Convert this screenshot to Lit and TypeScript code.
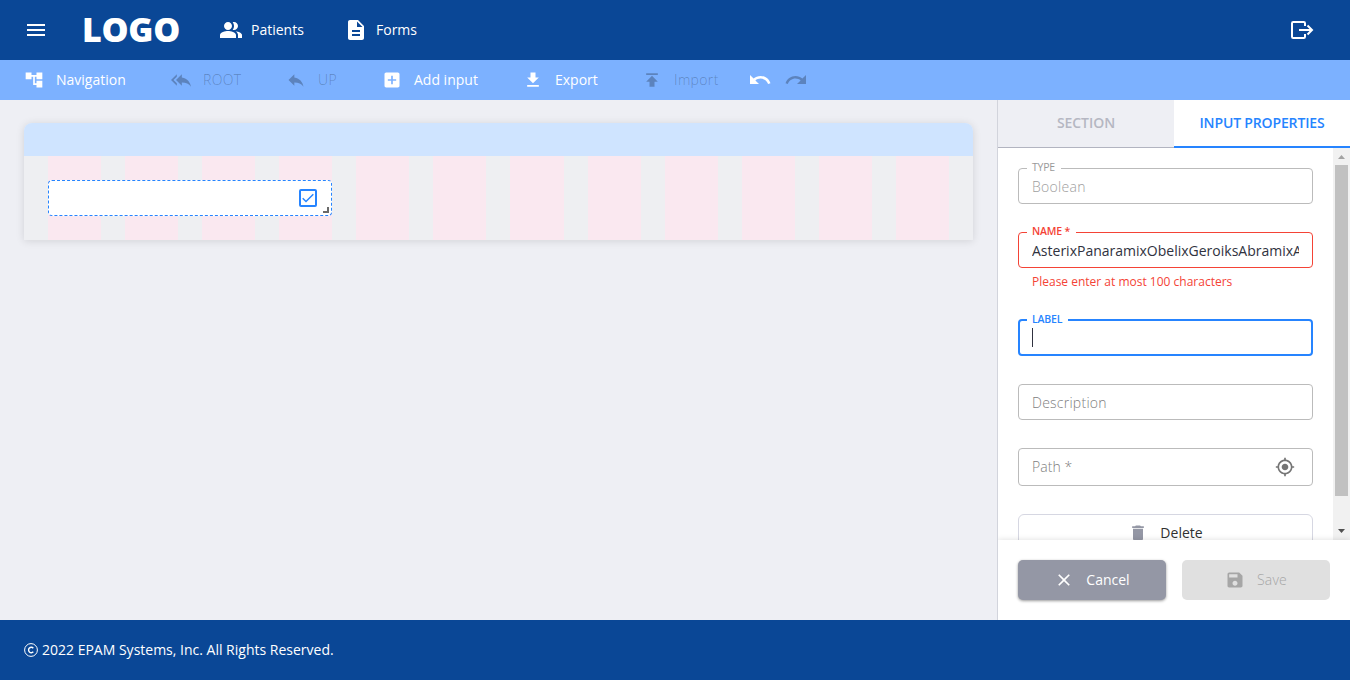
import { LitElement, html, css, nothing } from "lit";
import { customElement, property } from "lit/decorators.js";
import { classMap } from "lit/directives/class-map.js";

const ICONS: Record<string, string> = {
  menu: "M3 18h18v-2H3v2zm0-5h18v-2H3v2zm0-7v2h18V6H3z",
  people:
    "M16.67 13.13C18.04 14.06 19 15.32 19 17v3h4v-3c0-2.18-3.57-3.47-6.33-3.87zM15 12c2.21 0 4-1.79 4-4s-1.79-4-4-4c-.47 0-.91.1-1.33.24C14.5 5.27 15 6.58 15 8s-.5 2.73-1.33 3.76c.42.14.86.24 1.33.24zM9 12c2.21 0 4-1.79 4-4s-1.79-4-4-4-4 1.79-4 4 1.79 4 4 4zm0 1c-2.67 0-8 1.34-8 4v3h16v-3c0-2.66-5.33-4-8-4z",
  description:
    "M14 2H6c-1.1 0-1.99.9-1.99 2L4 20c0 1.1.89 2 1.99 2H18c1.1 0 2-.9 2-2V8l-6-6zm2 16H8v-2h8v2zm0-4H8v-2h8v2zm-3-5V3.5L18.5 9H13z",
  tree: "M22 11V3h-7v3H9V3H2v8h7V8h2v10h4v3h7v-8h-7v3h-2V8h2v3z",
  replyAll: "M7 8V5l-7 7 7 7v-3l-4-4 4-4zm6 1V5l-7 7 7 7v-4.1c5 0 8.500 1.600 11 5.100-1-5-4-10-11-11z",
  reply: "M10 9V5l-7 7 7 7v-4.1c5 0 8.500 1.600 11 5.100-1-5-4-10-11-11z",
  addBox:
    "M19 3H5c-1.110 0-2 .9-2 2v14c0 1.100.89 2 2 2h14c1.100 0 2-.9 2-2V5c0-1.100-.9-2-2-2zm-2 10h-4v4h-2v-4H7v-2h4V7h2v4h4v2z",
  download: "M19 9h-4V3H9v6H5l7 7 7-7zM5 18v2h14v-2H5z",
  publish: "M5 4v2h14V4H5zm0 10h4v6h6v-6h4l-7-7-7 7z",
  undo: "M12.5 8c-2.650 0-5.050.99-6.900 2.600L2 7v9h9l-3.620-3.620c1.390-1.160 3.160-1.880 5.120-1.880 3.540 0 6.550 2.310 7.600 5.500l2.370-.78C21.080 11.030 17.150 8 12.500 8z",
  redo: "M18.400 10.600C16.550 8.990 14.150 8 11.500 8c-4.650 0-8.580 3.030-9.960 7.220L3.900 16c1.050-3.190 4.050-5.500 7.600-5.500 1.950 0 3.730.72 5.120 1.880L13 16h9V7l-3.600 3.600z",
  target:
    "M12 8c-2.210 0-4 1.790-4 4s1.790 4 4 4 4-1.790 4-4-1.790-4-4-4zm8.940 3c-.46-4.170-3.770-7.480-7.940-7.940V1h-2v2.060C6.830 3.520 3.520 6.830 3.060 11H1v2h2.060c.46 4.170 3.770 7.480 7.940 7.940V23h2v-2.060c4.170-.46 7.480-3.770 7.940-7.940H23v-2h-2.060zM12 19c-3.870 0-7-3.130-7-7s3.130-7 7-7 7 3.130 7 7-3.130 7-7 7z",
  trash: "M6 19c0 1.100.9 2 2 2h8c1.100 0 2-.9 2-2V7H6v12zM19 4h-3.500l-1-1h-5l-1 1H5v2h14V4z",
  close: "M19 6.410L17.590 5 12 10.590 6.410 5 5 6.410 10.590 12 5 17.590 6.410 19 12 13.410 17.590 19 19 17.590 13.410 12z",
  save: "M17 3H5c-1.110 0-2 .9-2 2v14c0 1.100.89 2 2 2h14c1.100 0 2-.9 2-2V7l-4-4zm-5 16c-1.660 0-3-1.340-3-3s1.340-3 3-3 3 1.340 3 3-1.340 3-3 3zm3-10H5V5h10v4z",
};

const icon = (name: string, size = 20) => html`
  <svg width=${size} height=${size} viewBox="0 0 24 24" fill="currentColor"><path d=${ICONS[name]}></path></svg>
`;

@customElement("form-field")
class FormField extends LitElement {
  @property() label = "";
  @property() value = "";
  @property() placeholder = "";
  @property() helper = "";
  @property() state = "";
  @property() endIcon = "";

  static styles = css`
    :host { display: block; }
    .box {
      position: relative;
      box-sizing: border-box;
      height: 36px;
      display: flex;
      align-items: center;
      justify-content: space-between;
      padding: 2px 13px 0;
      border: 1px solid #bbb;
      border-radius: 4px;
      color: #303240;
      font-size: 14px;
    }
    .tall { height: 38px; padding: 0 17px 0 13px; }
    .error { border-color: #f44336; }
    .focused { height: 37px; border: 2px solid #2684ff; padding: 0 12px; }
    .label {
      position: absolute;
      left: 8px;
      top: -9px;
      padding: 0 6px 0 5px;
      background: #fff;
      font-size: 10.5px;
      line-height: 14px;
      font-weight: 400;
      letter-spacing: -0.2px;
      color: #999;
      white-space: pre;
    }
    .error .label { color: #f44336; font-weight: 600; }
    .focused .label { color: #2684ff; font-weight: 600; left: 7px; top: -9px; }
    .value { flex: 1; min-width: 0; overflow: hidden; white-space: nowrap; line-height: 20px; }
    .muted { color: #808080; font-weight: 300; letter-spacing: 0.25px; }
    .tall .muted { letter-spacing: 0.05px; }
    .disabled { color: #9e9e9e; font-weight: 300; letter-spacing: 0.3px; }
    .caret { width: 1px; height: 19px; background: #303240; }
    .helper { padding: 6px 14px 0; font-size: 12px; line-height: 16px; color: #f44336; }
    svg { display: block; color: #757575; }
  `;

  render() {
    const cls = {
      box: true,
      error: this.state === "error",
      focused: this.state === "focused",
      tall: !!this.endIcon,
    };
    const valueCls = {
      value: true,
      muted: !!this.placeholder,
      disabled: this.state === "disabled",
    };
    return html`
      <div class=${classMap(cls)}>
        ${this.label ? html`<span class="label">${this.label}</span>` : nothing}
        ${this.state === "focused"
          ? html`<span class="caret"></span>`
          : html`<span class=${classMap(valueCls)}>${this.value || this.placeholder}</span>`}
        ${this.endIcon ? icon(this.endIcon) : nothing}
      </div>
      ${this.helper ? html`<div class="helper">${this.helper}</div>` : nothing}
    `;
  }
}

@customElement("app-root")
class AppRoot extends LitElement {
  static styles = css`
    :host {
      display: flex;
      flex-direction: column;
      height: 680px;
      overflow: hidden;
      background: #eeeff4;
      font-family: "Open Sans", sans-serif;
      font-size: 14px;
      line-height: 20px;
      color: #303240;
    }
    svg { display: block; flex: none; }
    .header {
      height: 60px;
      flex: none;
      box-sizing: border-box;
      display: flex;
      align-items: center;
      padding: 0 36px 0 24px;
      background: #0a4796;
      color: #fff;
    }
    .logo {
      width: 137px;
      margin-left: 34px;
      padding-bottom: 2px;
      font-size: 34px;
      line-height: 58px;
      font-weight: 800;
      letter-spacing: -0.3px;
    }
    .link { display: flex; align-items: center; gap: 8px; width: 125px; }
    .logout { margin-left: auto; }
    .toolbar {
      height: 40px;
      flex: none;
      display: flex;
      align-items: center;
      padding-left: 24px;
      background: #7cb1ff;
      color: #fff;
    }
    .tool { display: flex; align-items: center; gap: 12px; flex: none; }
    .off { color: rgba(0, 0, 0, 0.26); }
    .off span { font-weight: 300; letter-spacing: 0.35px; }
    .history { display: flex; gap: 12px; }
    .main { flex: 1; min-height: 0; display: flex; }
    .canvas { flex: 1; padding: 23px 24px; }
    .section { height: 117px; border-radius: 8px 8px 0 0; box-shadow: 0 1px 8px rgba(0, 0, 0, 0.12); }
    .section-head { height: 33px; border-radius: 8px 8px 0 0; background: #cfe4ff; }
    .grid {
      height: 84px;
      box-sizing: border-box;
      padding: 0 24px;
      background: #eeeff2;
      display: grid;
      grid-template-columns: repeat(12, minmax(0, 1fr));
      grid-template-rows: 84px;
      column-gap: 24px;
    }
    .col { grid-row: 1; background: #fae8f0; }
    .item {
      grid-row: 1;
      grid-column: 1 / span 4;
      position: relative;
      box-sizing: border-box;
      height: 36px;
      margin-top: 24px;
      padding-right: 11px;
      display: flex;
      align-items: center;
      justify-content: flex-end;
      border: 1px dashed #2684ff;
      border-radius: 4px;
      background: #fff;
    }
    .handle {
      position: absolute;
      right: 2px;
      bottom: 2px;
      width: 4px;
      height: 4px;
      border-right: 2px solid #6a6a6a;
      border-bottom: 2px solid #6a6a6a;
    }
    .panel {
      width: 352px;
      flex: none;
      display: flex;
      flex-direction: column;
      border-left: 1px solid #d2d4dc;
      background: #fff;
    }
    .tabs { display: flex; height: 48px; flex: none; }
    .tab {
      flex: 1;
      box-sizing: border-box;
      border-bottom: 1px solid #b2b4c0;
      background: #eeeff4;
      color: #b5b7c2;
      text-align: center;
      line-height: 46px;
      font-weight: 600;
      letter-spacing: -0.05px;
    }
    .active { border-bottom: 2px solid #2684ff; background: #fff; color: #2684ff; letter-spacing: -0.15px; }
    .scroll { flex: 1; min-height: 0; overflow: hidden; display: flex; }
    .fields { flex: 1; min-width: 0; padding: 20px; display: flex; flex-direction: column; }
    .f-name { margin-top: 28px; }
    .f-label { margin-top: 29px; }
    .f-desc, .f-path, .delete { margin-top: 28px; }
    .delete {
      height: 40px;
      flex: none;
      box-sizing: border-box;
      display: flex;
      align-items: center;
      justify-content: center;
      gap: 12px;
      padding-bottom: 2px;
      border: 1px solid #d6d7e2;
      border-radius: 6px;
      color: #303030;
    }
    .delete svg { color: #9497a5; }
    .bar {
      width: 17px;
      flex: none;
      box-sizing: border-box;
      display: flex;
      flex-direction: column;
      align-items: center;
      padding: 7px 0;
      background: #f1f1f1;
    }
    .thumb { width: 13px; height: 331px; margin: 6px 0 auto; background: #c1c1c1; }
    .up { color: #a3a3a3; }
    .down { color: #505050; }
    .actions {
      height: 80px;
      flex: none;
      position: relative;
      box-sizing: border-box;
      padding: 20px;
      display: flex;
      gap: 16px;
      background: #fff;
      box-shadow: 0 0 6px rgba(0, 0, 0, 0.14);
      clip-path: inset(-8px 0 0 0);
    }
    .btn {
      flex: 1;
      display: flex;
      align-items: center;
      justify-content: center;
      gap: 12px;
      border-radius: 5px;
    }
    .cancel { background: #9497a5; color: #fff; box-shadow: 0 1px 3px rgba(0, 0, 0, 0.4); }
    .save { background: #e0e0e0; color: #a6a6a6; }
    .save span { font-weight: 300; letter-spacing: 0.2px; }
    .footer {
      height: 60px;
      flex: none;
      display: flex;
      align-items: center;
      gap: 4px;
      padding-left: 24px;
      background: #0a4796;
      color: #fff;
    }
    .w-nav { width: 147px; }
    .w-root { width: 115px; }
    .w-up { width: 96px; }
    .w-add { width: 141px; }
    .w-exp { width: 119px; }
    .w-imp { width: 106px; }
  `;

  private tools = [
    { icon: "tree", text: "Navigation", width: "w-nav" },
    { icon: "replyAll", text: "ROOT", off: true, width: "w-root" },
    { icon: "reply", text: "UP", off: true, width: "w-up" },
    { icon: "addBox", text: "Add input", width: "w-add" },
    { icon: "download", text: "Export", width: "w-exp" },
    { icon: "publish", text: "Import", off: true, width: "w-imp" },
  ];

  render() {
    return html`
      <header class="header">
        ${icon("menu", 24)}
        <span class="logo">LOGO</span>
        <span class="link">${icon("people", 24)}<span>Patients</span></span>
        <span class="link">${icon("description", 24)}<span>Forms</span></span>
        <svg class="logout" width="24" height="20" viewBox="0 0 24 20" fill="none" stroke="#fff" stroke-width="2">
          <path d="M15 6V3.200Q15 2 13.800 2H3.200Q2 2 2 3.200V16.800Q2 18 3.200 18H13.800Q15 18 15 16.800V14M9 10H21.500M17.500 5.500L22 10L17.500 14.500"></path>
        </svg>
      </header>
      <nav class="toolbar">
        ${this.tools.map(
          (t) => html`<span class="tool ${t.width} ${t.off ? "off" : ""}">${icon(t.icon)}<span>${t.text}</span></span>`,
        )}
        <span class="history">${icon("undo", 24)}<span class="off">${icon("redo", 24)}</span></span>
      </nav>
      <div class="main">
        <div class="canvas">
          <div class="section">
            <div class="section-head"></div>
            <div class="grid">
              ${Array.from({ length: 12 }, (_, i) => html`<div class="col" style="grid-column: ${i + 1}"></div>`)}
              <div class="item">
                <svg width="24" height="24" viewBox="0 0 24 24" fill="none" stroke="#2684ff" stroke-width="2">
                  <rect x="4" y="4" width="16" height="16" rx="1"></rect>
                  <path d="M6.700 12.200L10 15.500L17.300 8.200" stroke-width="1.500"></path>
                </svg>
                <span class="handle"></span>
              </div>
            </div>
          </div>
        </div>
        <aside class="panel">
          <div class="tabs">
            <div class="tab">SECTION</div>
            <div class="tab active">INPUT PROPERTIES</div>
          </div>
          <div class="scroll">
            <div class="fields">
              <form-field label="TYPE" value="Boolean" state="disabled"></form-field>
              <form-field
                class="f-name"
                label="NAME *"
                value="AsterixPanaramixObelixGeroiksAbramixAsterix"
                state="error"
                helper="Please enter at most 100 characters"
              ></form-field>
              <form-field class="f-label" label="LABEL" state="focused"></form-field>
              <form-field class="f-desc" placeholder="Description"></form-field>
              <form-field class="f-path" placeholder="Path *" .endIcon=${"target"}></form-field>
              <div class="delete">${icon("trash")}<span>Delete</span></div>
            </div>
            <div class="bar">
              <svg class="up" width="7" height="4" viewBox="0 0 7 4" fill="currentColor"><path d="M0 4L3.500 0L7 4Z"></path></svg>
              <div class="thumb"></div>
              <svg class="down" width="7" height="4" viewBox="0 0 7 4" fill="currentColor"><path d="M0 0L3.500 4L7 0Z"></path></svg>
            </div>
          </div>
          <div class="actions">
            <div class="btn cancel">${icon("close")}<span>Cancel</span></div>
            <div class="btn save">${icon("save")}<span>Save</span></div>
          </div>
        </aside>
      </div>
      <footer class="footer">
        <svg width="14" height="14" viewBox="0 0 14 14" fill="none" stroke="#fff">
          <circle cx="7" cy="7" r="6.400"></circle>
          <path d="M9.300 5.200A2.700 2.700 0 1 0 9.300 8.800" stroke-width="1.400"></path>
        </svg>
        <span>2022 EPAM Systems, Inc. All Rights Reserved.</span>
      </footer>
    `;
  }
}
